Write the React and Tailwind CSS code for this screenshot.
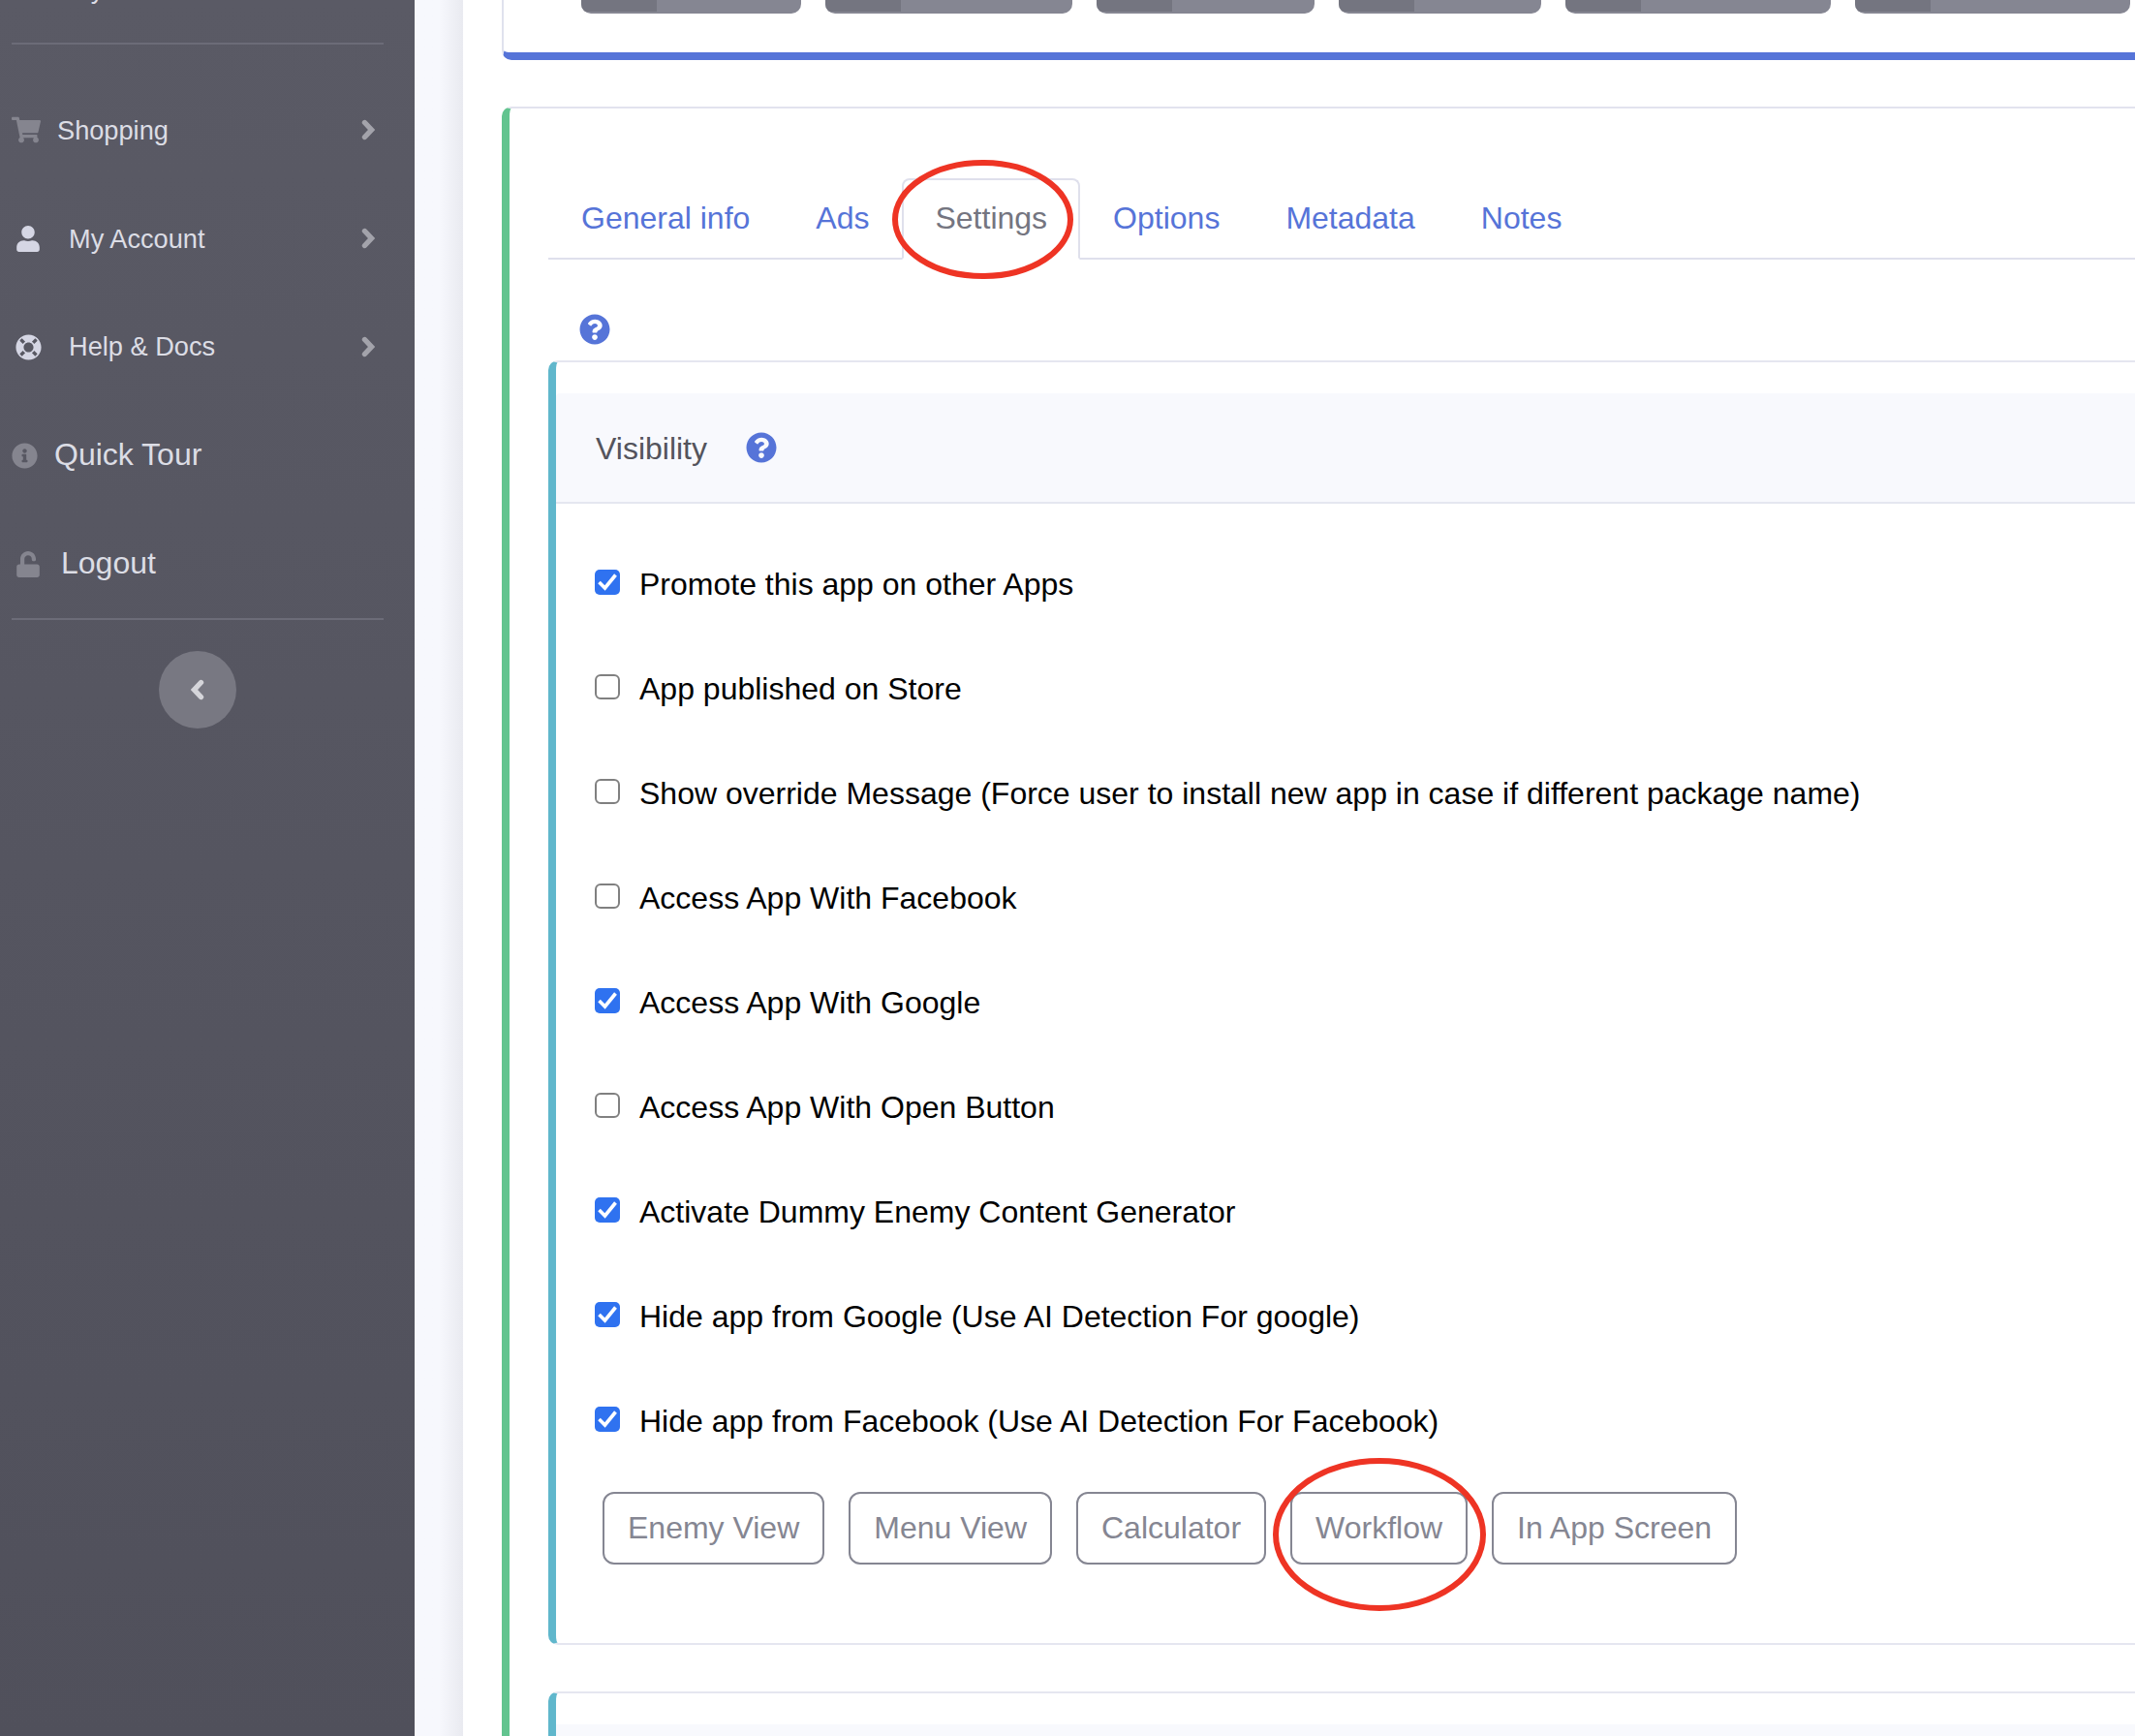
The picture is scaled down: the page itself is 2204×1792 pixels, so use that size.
import React from 'react';
import {
  FaShoppingCart,
  FaUser,
  FaLifeRing,
  FaInfoCircle,
  FaUnlock,
  FaQuestionCircle,
} from 'react-icons/fa';

const menuItems = [
  { label: 'Shopping', icon: <FaShoppingCart size={30} />, box: 'w-[30px] mr-[17px] text-[#85858f]', text: 'text-[27.2px] pt-[2px]', arrow: true },
  { label: 'My Account', icon: <FaUser size={27} />, box: 'w-[24px] ml-[5px] mr-[30px] text-[#d5d6e4]', text: 'text-[27.2px] pt-[2px]', arrow: true },
  { label: 'Help & Docs', icon: <FaLifeRing size={27} />, box: 'w-[27px] ml-[4px] mr-[28px] text-[#d5d6e4]', text: 'text-[27.2px] pt-[1px]', arrow: true },
  { label: 'Quick Tour', icon: <FaInfoCircle size={27} />, box: 'w-[27px] mr-[17px] text-[#85858f]', text: 'text-[32px] pb-[2px]', arrow: false },
  { label: 'Logout', icon: <FaUnlock size={27} />, box: 'w-[24px] ml-[5px] mr-[22px] text-[#85858f]', text: 'text-[32px] pb-[2px]', arrow: false },
];

const topButtons = ['w-[227px]', 'w-[255px]', 'w-[225px]', 'w-[209px]', 'w-[274px]', 'w-[284px]'];

const tabs = ['General info', 'Ads', 'Settings', 'Options', 'Metadata', 'Notes'];

const options = [
  { label: 'Promote this app on other Apps', checked: true },
  { label: 'App published on Store', checked: false },
  { label: 'Show override Message (Force user to install new app in case if different package name)', checked: false },
  { label: 'Access App With Facebook', checked: false },
  { label: 'Access App With Google', checked: true },
  { label: 'Access App With Open Button', checked: false },
  { label: 'Activate Dummy Enemy Content Generator', checked: true },
  { label: 'Hide app from Google (Use AI Detection For google)', checked: true },
  { label: 'Hide app from Facebook (Use AI Detection For Facebook)', checked: true },
];

const actions = ['Enemy View', 'Menu View', 'Calculator', 'Workflow', 'In App Screen'];

function Chevron({ left, className = '' }) {
  return (
    <svg viewBox="0 0 14 22" className={`w-[14px] h-[22px] ${className}`} fill="none">
      <path
        d={left ? 'M10.5 3.5L3.5 11l7 7.5' : 'M3.5 3.5l7 7.5-7 7.5'}
        stroke="currentColor"
        strokeWidth="5.4"
        strokeLinecap="round"
        strokeLinejoin="miter"
      />
    </svg>
  );
}

function MenuRow({ item }) {
  return (
    <div className="flex items-center h-[112px] pl-[12px] pr-[21px]">
      <span className={`flex items-center justify-center shrink-0 ${item.box}`}>{item.icon}</span>
      <span className={`text-[#dcdde5] ${item.text}`}>{item.label}</span>
      {item.arrow && <Chevron className="ml-auto text-[#a3a3ab]" />}
    </div>
  );
}

function Checkbox({ checked }) {
  if (checked) {
    return (
      <span className="flex items-center justify-center shrink-0 w-[26px] h-[26px] rounded-[5px] bg-[#2f72f0]">
        <svg viewBox="0 0 26 26" className="w-[26px] h-[26px]" fill="none">
          <path d="M4.5 13l6 6L21.5 5.5" stroke="#fff" strokeWidth="3.6" />
        </svg>
      </span>
    );
  }
  return <span className="shrink-0 w-[26px] h-[26px] rounded-[6px] border-2 border-[#808080] bg-white" />;
}

function RedRing({ className, w, h }) {
  return (
    <svg className={`absolute pointer-events-none ${className}`} width={w} height={h} fill="none">
      <ellipse cx={w / 2} cy={h / 2} rx={w / 2 - 3} ry={h / 2 - 3} stroke="#ee3424" strokeWidth="6" />
    </svg>
  );
}

export default function App() {
  return (
    <div className="relative flex w-[2204px] h-[1792px] overflow-hidden bg-white font-['Liberation_Sans',Arial,sans-serif]">
      {/* Sidebar */}
      <aside className="shrink-0 w-[428px] h-full pr-[20px] bg-linear-to-b from-[#5a5a65] to-[#50505b]">
        <div className="-mt-[68px]">
          <MenuRow item={{ label: 'My Games', icon: null, box: 'w-[24px] ml-[5px] mr-[30px]', text: 'text-[27.2px] pt-[2px]', arrow: true }} />
        </div>
        <div className="h-[2px] mx-[12px] bg-[#6c6c78]" />
        <div className="mt-[32px]">
          {menuItems.map((item) => (
            <MenuRow key={item.label} item={item} />
          ))}
        </div>
        <div className="h-[2px] mx-[12px] bg-[#6c6c78]" />
        <div className="flex justify-center mt-[32px]">
          <button className="flex items-center justify-center w-[80px] h-[80px] rounded-full bg-[#787882] text-[#d5d5da]">
            <Chevron left />
          </button>
        </div>
      </aside>

      {/* Gutter */}
      <div className="shrink-0 w-[50px] h-full bg-linear-to-r from-[#f7f8fd] from-50% to-[#e9eaf0]" />

      {/* Content */}
      <main className="flex-1 min-w-0 pl-[40px]">
        <div className="-mt-[60px] pl-[80px] pb-[40px] border-l-2 border-b-8 border-l-[#e0e2ee] border-b-[#5674d8] rounded-bl-[10px]">
          <div className="flex gap-[25px]">
            {topButtons.map((width) => (
              <div key={width} className={`flex h-[74px] bg-[#858692] rounded-b-[10px] overflow-hidden ${width}`}>
                <div className="w-[78px] h-[72px] bg-[#747580]" />
              </div>
            ))}
          </div>
        </div>

        <div className="mt-[48px] pl-[40px] border-l-8 border-t-2 border-l-[#62c48f] border-t-[#e2e3ee] rounded-tl-[10px]">
          <div className="pt-[72px]">
            <div className="flex border-b-2 border-[#dfe0ec]">
              {tabs.map((tab) =>
                tab === 'Settings' ? (
                  <div key={tab} className="-mb-[2px] px-[32px] pt-[15px] pb-[17px] border-2 border-[#dfe0ec] border-b-white rounded-t-[8px] bg-white text-[32px] leading-[48px] text-[#747580]">
                    {tab}
                  </div>
                ) : (
                  <div key={tab} className="-mb-[2px] px-[32px] pt-[15px] pb-[17px] border-2 border-transparent text-[32px] leading-[48px] text-[#5674d8]">
                    {tab}
                  </div>
                )
              )}
            </div>
          </div>

          <div className="flex items-center h-[104px] pl-[32px]">
            <FaQuestionCircle size={32} className="text-[#5674d8] mt-[40px]" />
          </div>

          <section className="border-l-8 border-t-2 border-b-2 border-l-[#60b7cc] border-t-[#e5e6f0] border-b-[#e5e6f0] rounded-l-[10px]">
            <div className="mt-[32px] flex items-center h-[114px] pl-[41px] bg-[#f8f9fd] border-b-2 border-[#e5e7f0] rounded-tl-[4px]">
              <span className="text-[32px] pt-[1px] text-[#54545c]">Visibility</span>
              <FaQuestionCircle size={32} className="ml-[40px] text-[#5674d8]" />
            </div>
            <div className="pt-[27px] pl-[40px]">
              {options.map((option) => (
                <label key={option.label} className="flex items-center gap-[20px] h-[108px] text-[32px] text-black">
                  <Checkbox checked={option.checked} />
                  <span className="pt-[3px]">{option.label}</span>
                </label>
              ))}
            </div>
            <div className="flex gap-[25px] mt-[21px] ml-[48px] mb-[81px]">
              {actions.map((action) => (
                <button key={action} className="h-[75px] px-[24px] pb-[2px] border-2 border-[#858692] rounded-[12px] text-[32px] text-[#858692]">
                  {action}
                </button>
              ))}
            </div>
          </section>

          <section className="mt-[48px] border-l-8 border-t-2 border-l-[#60b7cc] border-t-[#e5e6f0] rounded-tl-[10px]">
            <div className="mt-[32px] h-[114px] bg-[#f8f9fd]" />
          </section>
        </div>
      </main>

      {/* Red annotation rings */}
      <RedRing className="left-[921px] top-[165px]" w={187} h={123} />
      <RedRing className="left-[1314px] top-[1505px]" w={220} h={158} />
    </div>
  );
}
